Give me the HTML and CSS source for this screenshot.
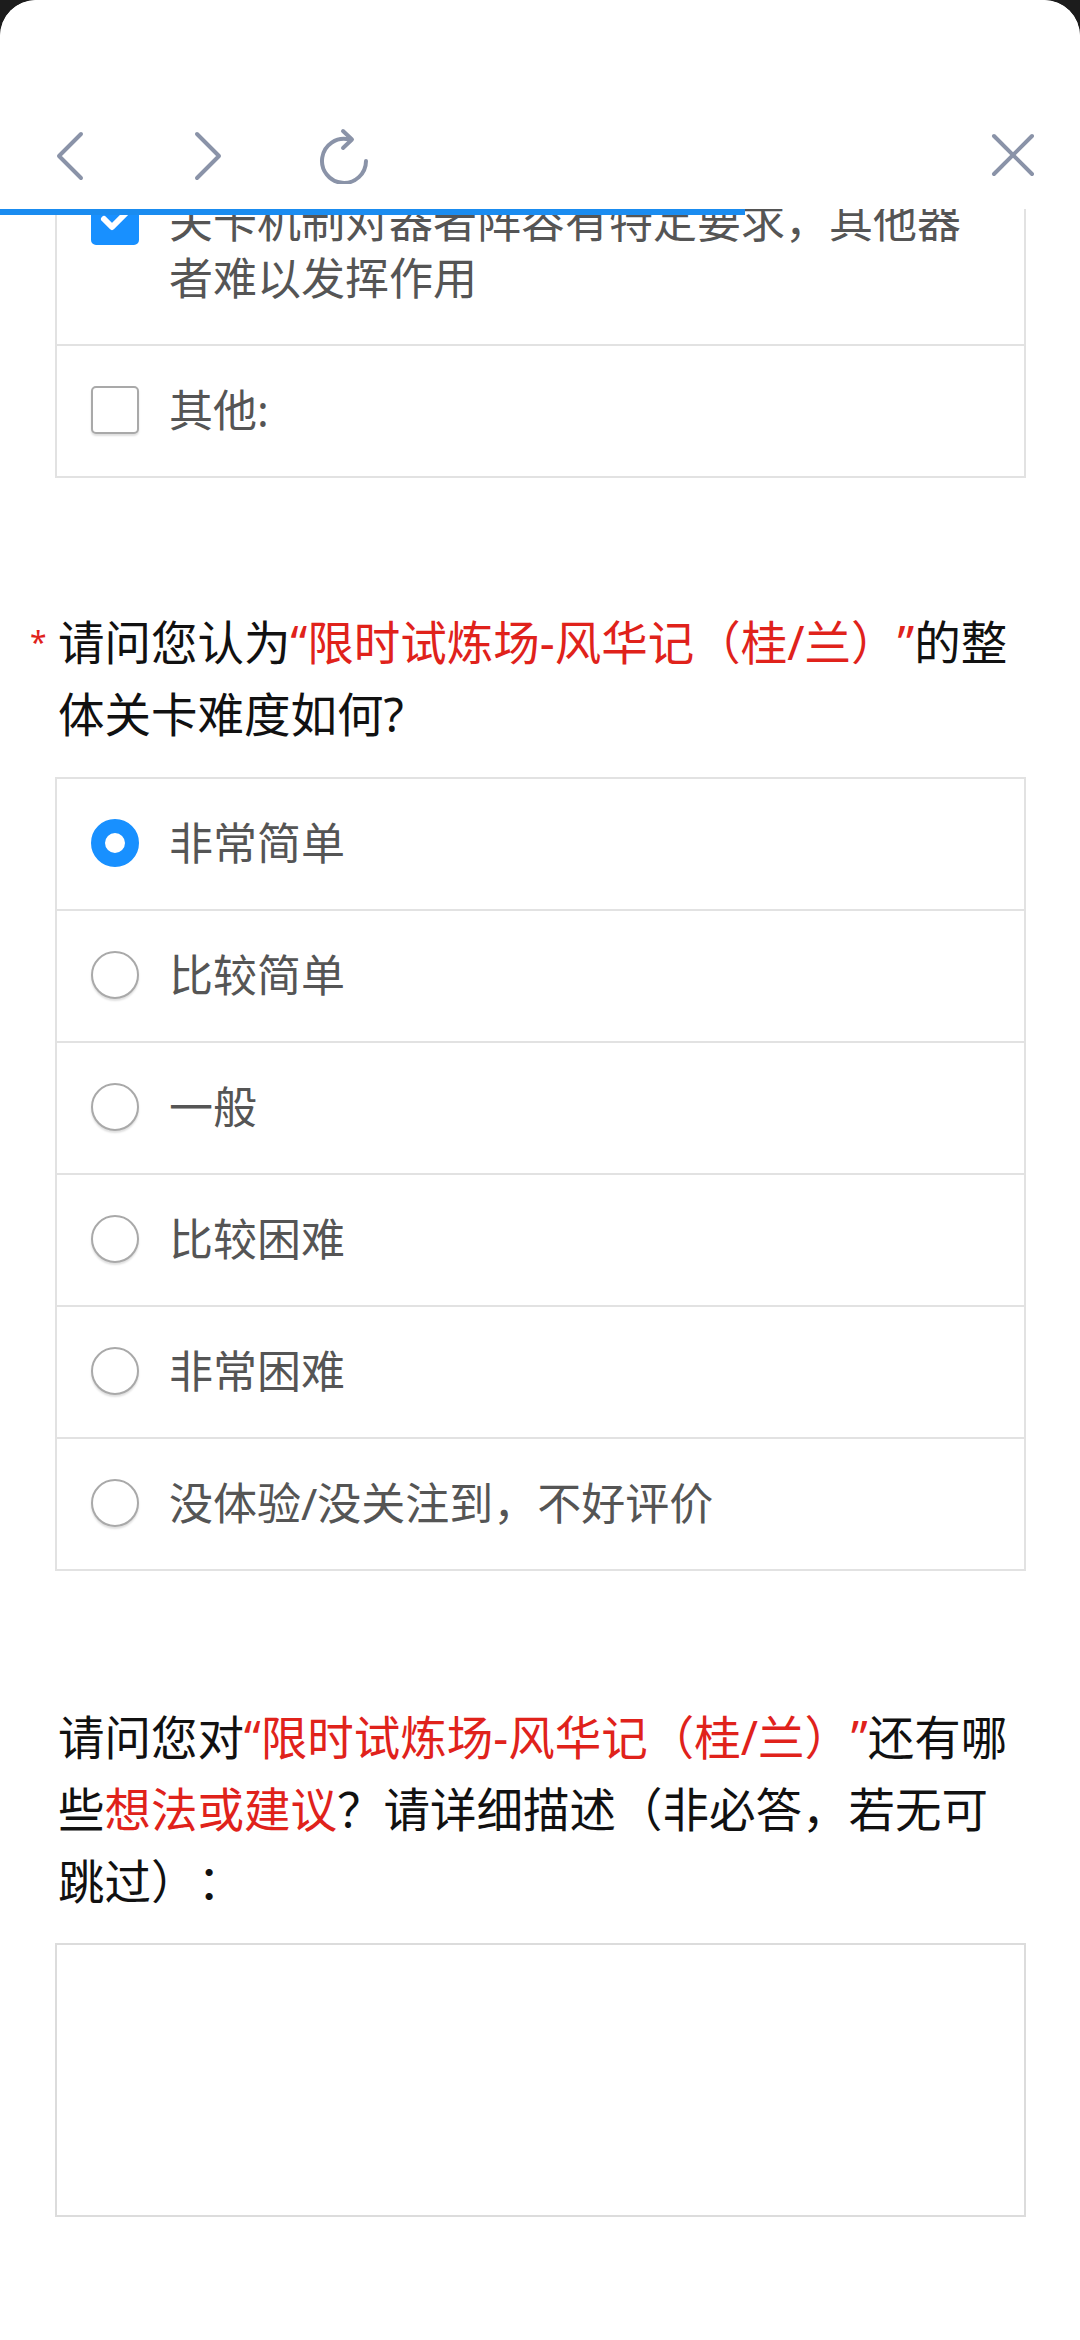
FILE: index.html
```html
<!DOCTYPE html>
<html lang="zh-CN">

<head>
    <meta charset="UTF-8">
    <meta name="viewport" content="width=device-width, initial-scale=1.0">
    <title>问卷</title>
    <link rel="stylesheet" href="styles.css">
</head>

<body>
    <div class="sheet">

        <header class="topbar">
            <div class="nav">
                <svg class="ico ico_back" width="30" height="50" viewBox="0 0 30 50">
                    <polyline points="26,3 4,25 26,47" />
                </svg>
                <svg class="ico ico_fwd" width="30" height="50" viewBox="0 0 30 50">
                    <polyline points="4,3 26,25 4,47" />
                </svg>
                <svg class="ico ico_reload" width="52" height="58" viewBox="0 0 52 58">
                    <path d="M47 35 A22 22 0 1 1 30 13.5" />
                    <polyline points="24,5 33,13.5 24,22" />
                </svg>
                <svg class="ico ico_close" width="46" height="44" viewBox="0 0 46 44">
                    <line x1="4" y1="3" x2="42" y2="41" />
                    <line x1="42" y1="3" x2="4" y2="41" />
                </svg>
            </div>
            <div class="progress"></div>
        </header>

        <main class="survey">

            <div class="choices">
                <label class="choice">
                    <span class="box checked">
                        <svg width="44" height="44" viewBox="0 0 44 44">
                            <polyline points="11,20 19,28 33,14" />
                        </svg>
                    </span>
                    <span class="choice_text">关卡机制对器者阵容有特定要求，其他器者难以发挥作用</span>
                </label>
                <label class="choice">
                    <span class="box"></span>
                    <span class="choice_text">其他:</span>
                </label>
            </div>

            <div class="question">
                <span class="star">*</span>
                <p class="q_text">请问您认为<span class="hl">“限时试炼场-风华记（桂/兰）”</span>的整体关卡难度如何?</p>
            </div>

            <div class="choices gap_top">
                <label class="choice"><span class="radio checked"></span><span class="choice_text">非常简单</span></label>
                <label class="choice"><span class="radio"></span><span class="choice_text">比较简单</span></label>
                <label class="choice"><span class="radio"></span><span class="choice_text">一般</span></label>
                <label class="choice"><span class="radio"></span><span class="choice_text">比较困难</span></label>
                <label class="choice"><span class="radio"></span><span class="choice_text">非常困难</span></label>
                <label class="choice"><span class="radio"></span><span class="choice_text">没体验/没关注到，不好评价</span></label>
            </div>

            <div class="question">
                <span class="star"></span>
                <p class="q_text">请问您对<span class="hl">“限时试炼场-风华记（桂/兰）”</span>还有哪些<span class="hl">想法或建议</span>？请详细描述（非必答，若无可跳过）：</p>
            </div>

            <textarea class="answer"></textarea>

        </main>
    </div>
</body>

</html>
```

FILE: styles.css
```css
* {
    box-sizing: border-box;

    --blue: #1890ff;
    --red: #e0221b;
    --line: #e2e2e2;
    --icon: #8a93a8;
}

html,
body {
    margin: 0;
    padding: 0;
    background-color: #1c1c1c;
    font-family: "Noto Sans", "Noto Sans CJK SC", sans-serif;
    text-spacing-trim: space-all;
}

body {
    width: 1080px;
    height: 2340px;
    overflow: hidden;
}

.sheet {
    position: relative;
    min-height: 2340px;
    background-color: #fff;
    border-radius: 36px 36px 0 0;
    overflow: hidden;
}

/* barra do topo, fica por cima do conteúdo rolado */
.topbar {
    position: absolute;
    top: 0;
    left: 0;
    right: 0;
    z-index: 2;
}

.nav {
    display: flex;
    align-items: flex-start;
    height: 209px;
    padding: 126px 44px 0 55px;
    background-color: #fff;
    border-radius: 36px 36px 0 0;
}

.ico {
    fill: none;
    stroke: var(--icon);
    stroke-width: 4;
    stroke-linecap: round;
    stroke-linejoin: round;
}

.ico_back {
    margin-top: 5px;
}

.ico_fwd {
    margin: 5px 0 0 108px;
}

.ico_reload {
    margin: 0 0 0 96px;
}

.ico_close {
    margin: 7px 0 0 auto;
}

.progress {
    width: 745px;
    height: 6px;
    background-color: #1a8cf0;
}

.survey {
    padding: 155px 54px 0 55px;
}

.choices {
    border: 2px solid var(--line);
}

.gap_top {
    margin-top: 27px;
}

.choice {
    display: flex;
    align-items: flex-start;
    gap: 30px;
    padding: 36px 50px 37px 34px;
    border-top: 2px solid var(--line);

    color: #555;
    font-size: 44px;
    line-height: 57px;
}

.choice:first-child {
    border-top: none;
}

.choice_text {
    flex: 1;
}

.box,
.radio {
    flex: none;
    width: 48px;
    height: 48px;
    margin-top: 4px;
    border: 2px solid #a9a9a9;
    background-color: #fff;
    box-shadow: 0 2px 2px rgba(0, 0, 0, 0.13);
}

.box {
    display: flex;
    align-items: center;
    justify-content: center;
    border-radius: 5px;
}

.box.checked {
    border-color: var(--blue);
    background-color: var(--blue);
    box-shadow: none;
}

.box svg {
    fill: none;
    stroke: #fff;
    stroke-width: 6;
    stroke-linecap: round;
    stroke-linejoin: round;
}

.radio {
    border-radius: 50%;
}

.radio.checked {
    border: 14px solid var(--blue);
    box-shadow: none;
}

.question {
    display: flex;
    margin: 128px 0 0 -25px;
    color: #111;
}

.gap_top+.question {
    margin-top: 130px;
}

.star {
    flex: none;
    width: 28px;
    color: var(--red);
    font-size: 30px;
    line-height: 72px;
}

.q_text {
    width: 964px;
    margin: 0;
    font-size: 46.5px;
    line-height: 72px;
}

.hl {
    color: var(--red);
}

.answer {
    display: block;
    width: 100%;
    height: 274px;
    margin-top: 26px;
    border: 2px solid #dcdcdc;
    border-radius: 0;
    resize: none;
    outline: none;
    background-color: #fff;
}
```
